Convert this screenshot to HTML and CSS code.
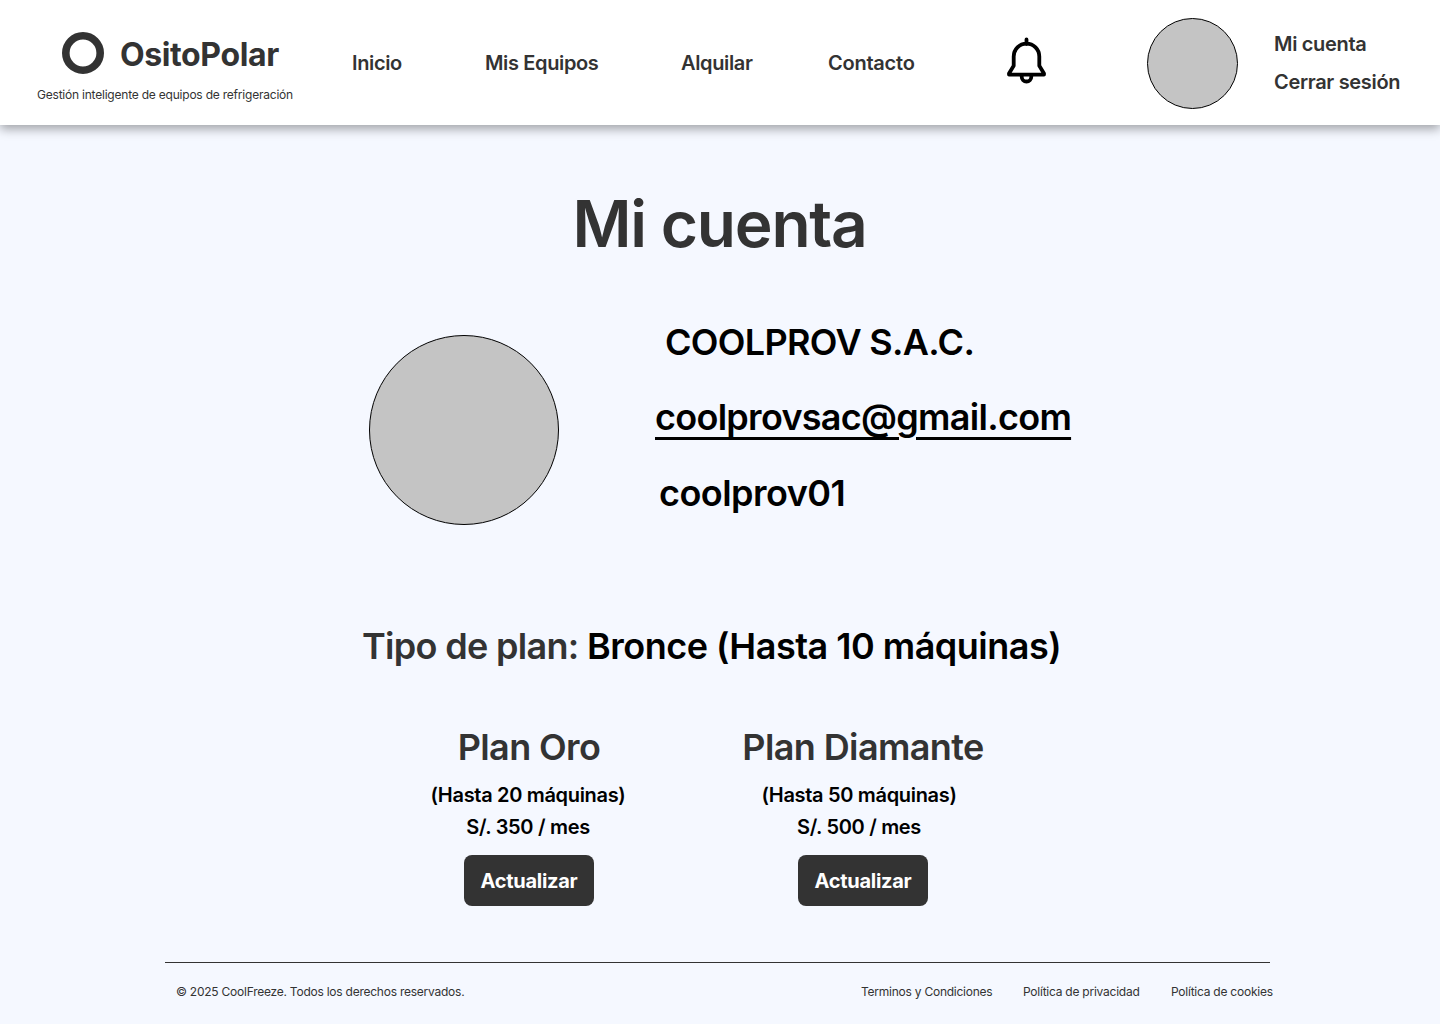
FILE: index.html
```html
<!DOCTYPE html>
<html lang="es">
<head>
<meta charset="utf-8">
<title>OsitoPolar - Mi cuenta</title>
<link rel="stylesheet" href="styles.css">
</head>
<body>
<header class="header">
  <div class="brand">
    <div class="brand-row">
      <svg class="brand-mark" width="42" height="42" viewBox="0 0 42 42"><circle cx="21" cy="21" r="17.2" fill="none" stroke="#333" stroke-width="7.6"/></svg>
      <span class="brand-name">OsitoPolar</span>
    </div>
    <p class="tagline">Gestión inteligente de equipos de refrigeración</p>
  </div>
  <a class="nav-link">Inicio</a>
  <a class="nav-link">Mis Equipos</a>
  <a class="nav-link">Alquilar</a>
  <a class="nav-link contact">Contacto</a>
  <svg class="bell" width="40" height="48" viewBox="0 0 40 48" fill="none" stroke="#000" stroke-width="3.8" stroke-linejoin="round" stroke-linecap="round">
    <path d="M19.500 2.500V7M2 37.600v-1.200l4.700-7.600V19.500a12.800 12.800 0 0 1 25.600 0v9.300l4.700 7.600v1.200z"/>
    <path d="M14.700 38.500v1.200a4.800 4.800 0 0 0 9.600 0v-1.200" stroke-linecap="butt"/>
  </svg>
  <div class="avatar avatar-small"></div>
  <div class="account">
    <a>Mi cuenta</a>
    <a>Cerrar sesión</a>
  </div>
</header>
<main class="main">
  <h1 class="title">Mi cuenta</h1>
  <section class="profile">
    <div class="avatar avatar-large"></div>
    <div class="details">
      <p class="company">COOLPROV S.A.C.</p>
      <p class="email">coolprovsac@gmail.com</p>
      <p class="username">coolprov01</p>
    </div>
  </section>
  <p class="current-plan">Tipo de plan: <span class="plan-value">Bronce (Hasta 10 máquinas)</span></p>
  <section class="plans">
    <article class="plan plan-gold">
      <h2>Plan Oro</h2>
      <p>(Hasta 20 máquinas)</p>
      <p>S/. 350 / mes</p>
      <button class="button">Actualizar</button>
    </article>
    <article class="plan plan-diamond">
      <h2>Plan Diamante</h2>
      <p>(Hasta 50 máquinas)</p>
      <p>S/. 500 / mes</p>
      <button class="button">Actualizar</button>
    </article>
  </section>
</main>
<footer class="footer">
  <span class="copyright">© 2025 CoolFreeze. Todos los derechos reservados.</span>
  <a>Terminos y Condiciones</a>
  <a>Política de privacidad</a>
  <a>Política de cookies</a>
</footer>
</body>
</html>
```
FILE: styles.css
```css
* { box-sizing: border-box; margin: 0; padding: 0; }
body {
  background: #f5f8ff;
  color: #333;
  font-family: Inter, sans-serif;
  height: 1024px;
  overflow: hidden;
  white-space: nowrap;
}
.header {
  display: grid;
  grid-template-columns: 315px 133px 196px 147px 179px 140px 127px 1fr;
  align-items: center;
  height: 125px;
  padding-left: 37px;
  background: #fff;
  box-shadow: 0 4px 10px rgba(0, 0, 0, .35);
  font-size: 20px;
  font-weight: 600;
  letter-spacing: -.018em;
  line-height: 38px;
}
.contact { letter-spacing: -.012em; }
.brand { align-self: start; padding-top: 32px; }
.brand-row { display: flex; gap: 16px; height: 42px; padding-left: 25px; }
.brand-name { padding-top: 3px; font-size: 32px; font-weight: 700; line-height: 40px; letter-spacing: -.012em; }
.tagline { padding-top: 11px; font-size: 12px; font-weight: 400; line-height: 20px; letter-spacing: -.018em; }
.bell { margin-top: -3px; }
.account { display: flex; flex-direction: column; letter-spacing: -.016em; }
.avatar { background: #c4c4c4; border: 1px solid #000; border-radius: 50%; }
.avatar-small { width: 91px; height: 91px; margin-top: 2px; }
.avatar-large { width: 190px; height: 190px; margin-top: 12px; }
.main { font-weight: 600; }
.title { padding: 59px 1px 0 0; font-size: 64px; line-height: 80px; font-weight: 600; letter-spacing: -.019em; text-align: center; }
.profile { display: flex; gap: 96px; padding: 59px 0 0 369px; color: #000; font-size: 36px; }
.details { display: flex; flex-direction: column; gap: 31px; height: 205px; line-height: 44px; margin: -3px 0 0; letter-spacing: -.019em; }
.company { padding-left: 10px; }
.email { margin-bottom: 1px; letter-spacing: -.02em; text-decoration: underline; text-decoration-thickness: 2.6px; text-underline-offset: 7px; }
.username { padding-left: 4px; letter-spacing: -.015em; }
.current-plan { padding: 99px 0 0 362px; font-size: 36px; line-height: 44px; letter-spacing: -.019em; }
.plan-value { color: #000; letter-spacing: -.014em; }
.plans { display: flex; gap: 74px; padding: 55px 0 0 399px; }
.plan { display: flex; flex-direction: column; align-items: center; width: 260px; color: #000; font-size: 20px; line-height: 32px; letter-spacing: -.016em; }
.plan h2 { margin-bottom: 8px; color: #333; font-size: 36px; font-weight: 600; line-height: 48px; letter-spacing: -.017em; }
.plan-gold p { margin-left: -2px; }
.plan-diamond p { margin-left: -8px; }
.button { width: 130px; height: 51px; margin-top: 12px; border: 0; border-radius: 8px; background: #333; color: #fff; font: 700 20px/24px Inter, sans-serif; letter-spacing: -.014em; }
.footer {
  display: grid;
  grid-template-columns: 685px 162px 148px 1fr;
  width: 1105px;
  margin: 56px 0 0 165px;
  padding: 19px 0 0 11px;
  border-top: 1px solid #333;
  font-size: 12px;
  line-height: 20px;
  letter-spacing: -.02em;
}
```
